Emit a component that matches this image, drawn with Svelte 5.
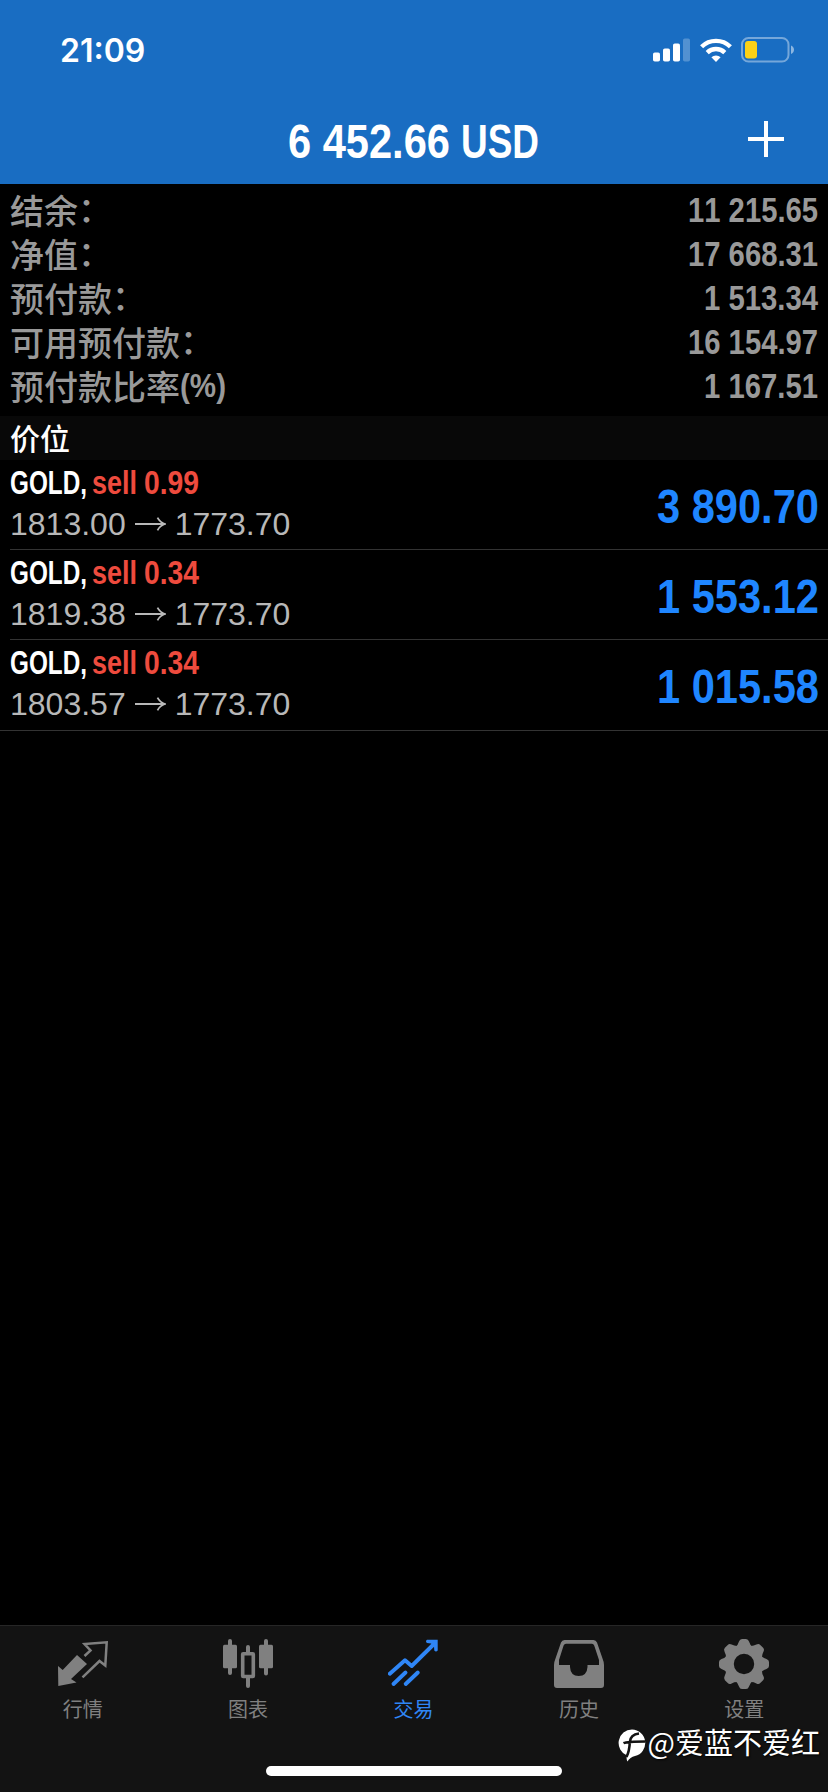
<script lang="ts">
  interface SummaryRow {
    label: string;
    colon?: boolean;
    suffix?: string;
    value: string;
    width: number;
  }

  interface Position {
    volume: string;
    open: string;
    current: string;
    profit: string;
  }

  const summary: SummaryRow[] = [
    { label: '结余', colon: true, value: '11 215.65', width: 130 },
    { label: '净值', colon: true, value: '17 668.31', width: 130 },
    { label: '预付款', colon: true, value: '1 513.34', width: 114 },
    { label: '可用预付款', colon: true, value: '16 154.97', width: 130 },
    { label: '预付款比率', suffix: '(%)', value: '1 167.51', width: 114 }
  ];

  const positions: Position[] = [
    { volume: '0.99', open: '1813.00', current: '1773.70', profit: '3 890.70' },
    { volume: '0.34', open: '1819.38', current: '1773.70', profit: '1 553.12' },
    { volume: '0.34', open: '1803.57', current: '1773.70', profit: '1 015.58' }
  ];

  const tabs = [
    { id: 'quotes', label: '行情' },
    { id: 'chart', label: '图表' },
    { id: 'trade', label: '交易' },
    { id: 'history', label: '历史' },
    { id: 'settings', label: '设置' }
  ];

  let active = $state('trade');

  // Advance widths of the bold face in em, digits are the default
  const advances: Record<string, number> = {
    ' ': 0.278, '.': 0.278, ',': 0.278, l: 0.278, '(': 0.333, ')': 0.333, '%': 0.889,
    G: 0.778, O: 0.778, L: 0.611, D: 0.722, U: 0.722, S: 0.667
  };

  function squeeze(text: string, width: number, size: number) {
    const natural = [...text].reduce((sum, char) => sum + (advances[char] ?? 0.556), 0);
    return width / (natural * size);
  }
</script>

<!-- Condensed text: the glyphs are squeezed to the given width -->
{#snippet narrow(text: string, width: number, size: number)}
  <svg class="narrow" {width} height={size * 1.2} font-size={size}>
    <text y={size * 0.95} transform="scale({squeeze(text, width, size)} 1)">{text}</text>
  </svg>
{/snippet}

<div class="screen">
  <header>
    <div class="status-bar">
      <span class="clock">21:09</span>
      <div class="indicators">
        <svg width="37" height="24" viewBox="0 0 37 24" fill="#fff">
          <rect x="0" y="14.5" width="7" height="9" rx="1.8" />
          <rect x="10" y="10.5" width="7" height="13" rx="1.8" />
          <rect x="20" y="5.5" width="7" height="18" rx="1.8" />
          <rect x="30" y="0.5" width="7" height="23" rx="1.8" opacity="0.25" />
        </svg>
        <svg class="wifi" width="32" height="24" viewBox="0 0 32 24" fill="none" stroke="#fff" stroke-width="4.4">
          <path d="M1.6 8.7a20.6 20.6 0 0 1 28.8 0" />
          <path d="M7.2 14.6a12.6 12.6 0 0 1 17.6 0" />
          <path d="M16 24l-4.6-4.8a6.8 6.8 0 0 1 9.2 0z" fill="#fff" stroke="none" />
        </svg>
        <svg width="54" height="26" viewBox="0 0 54 26">
          <rect x="1" y="1" width="46.5" height="23.5" rx="6.5" fill="none" stroke="#fff" stroke-opacity="0.4" stroke-width="2" />
          <rect x="4" y="4" width="12" height="17.5" rx="3" fill="#fcd116" />
          <path d="M50 8.5c4 1.5 4 7 0 8.5z" fill="#fff" opacity="0.5" />
        </svg>
      </div>
    </div>
    <div class="nav-bar">
      <h1>
        {@render narrow('6 452.66', 162, 48)}
        {@render narrow('USD', 78, 48)}
      </h1>
      <button class="add" aria-label="add">
        <svg width="36" height="36" viewBox="0 0 36 36" stroke="#fff" stroke-width="4">
          <path d="M0 18h36M18 0v36" />
        </svg>
      </button>
    </div>
  </header>

  <section class="summary">
    {#each summary as row}
      <div class="summary-row">
        <span class="label">
          {row.label}{#if row.colon}<span class="colon">：</span>{/if}
          {#if row.suffix}{@render narrow(row.suffix, 46, 33)}{/if}
        </span>
        {@render narrow(row.value, row.width, 34.5)}
      </div>
    {/each}
  </section>

  <h2>价位</h2>

  <ul class="positions">
    {#each positions as position}
      <li>
        <div class="deal">
          <div class="symbol">
            {@render narrow('GOLD,', 77, 33)}
            <span class="sell">
              {@render narrow('sell', 45, 33)}
              {@render narrow(position.volume, 55, 33)}
            </span>
          </div>
          <div class="prices">
            <span>{position.open}</span>
            <svg width="31" height="14" viewBox="0 0 31 14" fill="none" stroke="#b8b8b8" stroke-width="1.8">
              <path d="M0 7h30M22.5 0.7q2.5 4.8 7.5 6.3q-5 1.5-7.5 6.3" />
            </svg>
            <span>{position.current}</span>
          </div>
        </div>
        <div class="profit">{@render narrow(position.profit, 162, 48)}</div>
      </li>
    {/each}
  </ul>

  <nav class="tab-bar">
    {#each tabs as tab}
      <button class="tab" class:active={active === tab.id} onclick={() => (active = tab.id)}>
        <svg width="50" height="50" viewBox="0 0 50 50" fill="currentColor">
          {#if tab.id === 'quotes'}
            <path d="M19 16L29 25L13 40L18.5 43.5L0.3 47L0 27L4.7 31z" />
            <path d="M24.5 38.3L41.5 22L47.3 26.5L48.7 3.3L26.5 5L32.5 11.5L26.5 17" fill="none" stroke="currentColor" stroke-width="2.5" />
          {:else if tab.id === 'chart'}
            <rect x="0" y="5.7" width="14" height="23.6" rx="1.5" />
            <rect x="36" y="5.7" width="14" height="23.6" rx="1.5" />
            <rect x="19.7" y="14.7" width="10.6" height="22.8" rx="0.5" fill="none" stroke="currentColor" stroke-width="3.6" />
            <path d="M7 2v32M43 2v32.5M25 8v6M25 38v9" stroke="currentColor" stroke-width="4" stroke-linecap="round" />
          {:else if tab.id === 'trade'}
            <g fill="none" stroke="currentColor" stroke-width="3.9" stroke-linecap="round" stroke-linejoin="round">
              <path d="M1.8 34.7L17 21.3L23.7 27L46 5" />
              <path d="M5.5 45L17.5 33.5M17.7 45L29.8 33.5" />
            </g>
            <path d="M39 0.8H49.7V11.5Q48 13.5 46.3 11.5L46 7.5L43 4.5L39 4Q37 2.5 39 0.8z" />
          {:else if tab.id === 'history'}
            <path
              fill-rule="evenodd"
              d="M10.5 1H39.5Q42 1 43 3.5L48 18Q50 23 50 26V46Q50 49 47 49H3Q0 49 0 46V26Q0 23 2 18L7 3.5Q8 1 10.5 1zM12 4.7Q10.3 4.7 9.6 6.5L5 21V26H16V28Q16.5 37 24.7 37Q33 37 33.5 28V26H45V21L40.2 6.5Q39.5 4.7 38 4.7z"
            />
          {:else}
            <path
              fill-rule="evenodd"
              d="M25 5.5a19.5 19.5 0 1 0 0 39a19.5 19.5 0 1 0 0-39zM25 14.8a10.2 10.2 0 1 1 0 20.4a10.2 10.2 0 1 1 0-20.4z"
            />
            {#each [0, 45, 90, 135, 180, 225, 270, 315] as angle}
              <path d="M16.5 8Q19 6 20 2.5Q20.8 0 23 0H27Q29.2 0 30 2.5Q31 6 33.5 8L30 11H20z" transform="rotate({angle} 25 25)" />
            {/each}
          {/if}
        </svg>
        <span>{tab.label}</span>
      </button>
    {/each}
  </nav>

  <div class="watermark">
    <svg width="28" height="33" viewBox="0 0 28 33">
      <path d="M14 0.5a13.5 13.5 0 0 1 3 26.6Q12 28.5 9.5 32.5Q8 30 9 26.5A13.5 13.5 0 0 1 14 0.5z" fill="#fff" />
      <path d="M8.5 28Q11.5 22 11.8 13Q12.5 5.5 21 4.5M5.5 14.2Q9 12.5 27.5 12.5" fill="none" stroke="#131313" stroke-width="2.6" />
    </svg>
    <span>@爱蓝不爱红</span>
  </div>
  <div class="home-indicator"></div>
</div>

<style>
  :global(body) {
    background: #000;
  }

  .screen {
    position: relative;
    display: flex;
    flex-direction: column;
    width: 828px;
    height: 1792px;
    overflow: hidden;
    background: #000;
    color: #fff;
    font-family: 'Liberation Sans', 'Noto Sans CJK SC', sans-serif;
  }

  svg {
    display: block;
    flex: none;
  }

  button {
    padding: 0;
    border: 0;
    background: none;
    color: inherit;
    font: inherit;
  }

  /* the box is trimmed to the cap height, so rows align on the digits */
  .narrow {
    margin: -0.25em 0;
    overflow: visible;
    fill: currentColor;
    font-family: 'Liberation Sans', sans-serif;
    font-weight: 700;
    font-kerning: none;
  }

  .narrow text {
    white-space: pre;
  }

  header {
    box-sizing: border-box;
    height: 184px;
    background: #196dc2;
  }

  .status-bar {
    display: flex;
    align-items: center;
    justify-content: space-between;
    height: 99px;
    padding: 0 33px 0 60px;
  }

  .clock {
    padding-top: 1px;
    font: 600 32px Inter, sans-serif;
  }

  .indicators {
    display: flex;
    align-items: center;
    gap: 10px;
  }

  .wifi {
    margin-right: -1px;
  }

  .nav-bar {
    display: grid;
    grid-template-columns: 1fr auto 1fr;
    align-items: center;
    height: 85px;
    padding: 0 44px 0 42px;
  }

  h1 {
    display: flex;
    grid-column: 2;
    gap: 11px;
    margin: 0 0 1px;
  }

  .add {
    justify-self: end;
    margin-bottom: 6px;
  }

  .summary {
    padding: 4px 10px 8px;
    color: #999;
  }

  .summary-row {
    display: flex;
    align-items: center;
    justify-content: space-between;
    height: 44px;
  }

  .label {
    display: flex;
    align-items: center;
    margin-top: -1px;
    font: 500 34px/44px 'Noto Sans CJK SC', sans-serif;
  }

  .colon {
    transform: translate(0, -2px);
  }

  h2 {
    height: 44px;
    margin: 0;
    padding: 0 10px;
    background: #080808;
    font: 500 30px/42px 'Noto Sans CJK SC', sans-serif;
  }

  .positions {
    flex: 1;
    margin: 0;
    padding: 0;
    list-style: none;
  }

  li {
    display: flex;
    box-sizing: border-box;
    justify-content: space-between;
    height: 90px;
    margin-left: 10px;
    padding: 11px 9px 0 0;
    border-bottom: 1px solid #333;
  }

  li:last-child {
    height: 91px;
    margin-left: 0;
    padding-left: 10px;
  }

  .symbol,
  .sell {
    display: flex;
  }

  .symbol {
    gap: 5px;
  }

  .sell {
    gap: 7px;
    color: #ee4b3e;
  }

  .prices {
    display: flex;
    align-items: center;
    gap: 9px;
    margin-top: 12px;
    color: #b8b8b8;
    font-size: 32px;
    line-height: 36px;
  }

  .profit {
    padding-top: 18px;
    color: #1f86ff;
  }

  .tab-bar {
    display: grid;
    grid-template-columns: repeat(5, 1fr);
    box-sizing: border-box;
    height: 167px;
    padding-right: 1px;
    border-top: 1px solid #262626;
    background: #131313;
  }

  .tab {
    display: flex;
    flex-direction: column;
    align-items: center;
    padding-top: 13px;
    color: #808080;
  }

  .tab span {
    margin-top: 5px;
    font: 20px/30px 'Noto Sans CJK SC', sans-serif;
  }

  .tab.active {
    color: #2f86f6;
  }

  .watermark {
    position: absolute;
    right: 8px;
    bottom: 30px;
    display: flex;
    align-items: center;
    gap: 2px;
    font: 29px/40px 'Noto Sans CJK SC', sans-serif;
    text-shadow: 1px 1px 2px #000;
  }

  .watermark span {
    margin-top: -8px;
  }

  .watermark svg {
    margin-top: 1px;
  }

  .home-indicator {
    position: absolute;
    bottom: 16px;
    left: 266px;
    width: 296px;
    height: 10px;
    border-radius: 5px;
    background: #fff;
  }
</style>
